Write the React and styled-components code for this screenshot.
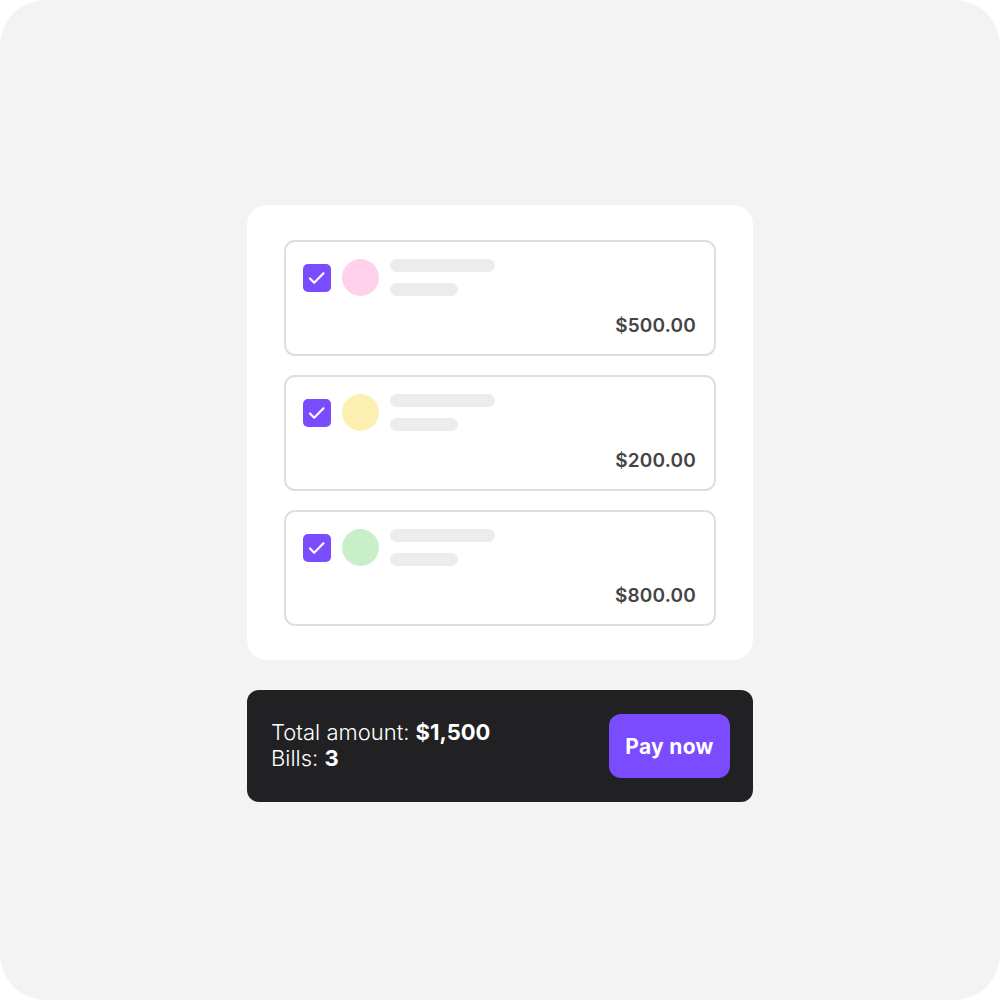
import React from "react";
import styled, { createGlobalStyle } from "styled-components";

const GlobalStyle = createGlobalStyle`
  html, body {
    margin: 0;
    padding: 0;
    background: #ffffff;
    font-family: Inter, "Noto Sans", sans-serif;
  }
`;

const bills = [
  { id: 1, color: "#ffd1ea", amount: "$500.00" },
  { id: 2, color: "#fdefb2", amount: "$200.00" },
  { id: 3, color: "#c9efc9", amount: "$800.00" },
];

function CheckIcon() {
  return (
    <svg width="28" height="28" viewBox="0 0 28 28" fill="none">
      <path
        d="M7 14.5l4.2 4.2 9.3-9.4"
        stroke="#fff"
        strokeWidth="2.2"
        strokeLinecap="round"
        strokeLinejoin="round"
      />
    </svg>
  );
}

export default function App() {
  return (
    <>
      <GlobalStyle />
      <Canvas>
        <Card>
          {bills.map((bill) => (
            <Bill key={bill.id}>
              <BillTop>
                <Checkbox>
                  <CheckIcon />
                </Checkbox>
                <Avatar color={bill.color} />
                <Lines>
                  <Line width={105} />
                  <Line width={68} />
                </Lines>
              </BillTop>
              <Amount>{bill.amount}</Amount>
            </Bill>
          ))}
        </Card>

        <Summary>
          <SummaryText>
            <div>
              Total amount: <strong>$1,500</strong>
            </div>
            <div>
              Bills: <strong>3</strong>
            </div>
          </SummaryText>
          <PayButton>Pay now</PayButton>
        </Summary>
      </Canvas>
    </>
  );
}

const Canvas = styled.div`
  width: 1000px;
  height: 1000px;
  box-sizing: border-box;
  background: #f3f3f3;
  border-radius: 46px;
  display: flex;
  flex-direction: column;
  align-items: center;
  padding-top: 205px;
`;

const Card = styled.div`
  width: 506px;
  box-sizing: border-box;
  background: #fff;
  border-radius: 20px;
  padding: 35px 37px 34px;
  display: flex;
  flex-direction: column;
  gap: 19px;
`;

const Bill = styled.div`
  height: 116px;
  box-sizing: border-box;
  border: 2px solid #dedede;
  border-radius: 11px;
  padding: 17px 18px 0 17px;
  display: flex;
  flex-direction: column;
`;

const BillTop = styled.div`
  display: flex;
  align-items: center;
`;

const Checkbox = styled.div`
  width: 28px;
  height: 28px;
  border-radius: 5px;
  background: #7b4cff;
  display: flex;
  align-items: center;
  justify-content: center;
  margin-right: 11px;
`;

const Avatar = styled.div`
  width: 37px;
  height: 37px;
  border-radius: 50%;
  background: ${(p) => p.color};
  margin-right: 11px;
`;

const Lines = styled.div`
  display: flex;
  flex-direction: column;
  gap: 11px;
`;

const Line = styled.div`
  width: ${(p) => p.width}px;
  height: 13px;
  border-radius: 7px;
  background: #ececec;
`;

const Amount = styled.div`
  align-self: flex-end;
  margin-top: 18px;
  font-size: 19px;
  font-weight: 600;
  color: #444;
  letter-spacing: 0.2px;
`;

const Summary = styled.div`
  margin-top: 30px;
  width: 506px;
  height: 112px;
  box-sizing: border-box;
  background: #212124;
  border-radius: 12px;
  padding: 0 23px 0 24px;
  display: flex;
  align-items: center;
  justify-content: space-between;
`;

const SummaryText = styled.div`
  color: #fff;
  font-size: 22px;
  line-height: 26px;
  font-weight: 300;
  margin-top: -3px;
  strong {
    font-weight: 700;
  }
`;

const PayButton = styled.button`
  width: 121px;
  height: 64px;
  border: none;
  border-radius: 12px;
  background: #7b4cff;
  color: #fff;
  font-family: Inter, "Noto Sans", sans-serif;
  font-size: 21px;
  font-weight: 700;
  letter-spacing: 0.3px;
  cursor: pointer;
`;
